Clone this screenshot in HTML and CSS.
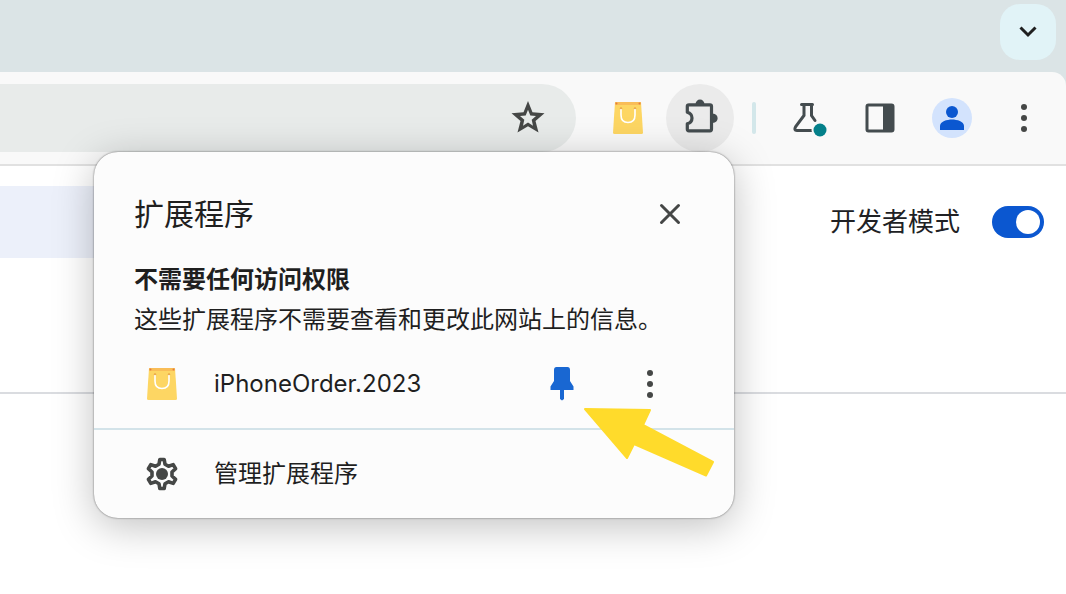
FILE: index.html
```html
<!DOCTYPE html>
<html lang="zh-CN">
<head>
<meta charset="utf-8">
<title>扩展程序</title>
<link rel="stylesheet" href="styles.css">
</head>
<body>
<svg class="defs" aria-hidden="true">
  <symbol id="bag" viewBox="0 0 32 34">
    <path d="M3 1H29L31 31.500Q31 33 29.500 33H2.500Q1 33 1 31.500Z" fill="#fdd663"/>
    <path d="M3 1H29V4H3Z" fill="#f9bd57"/>
    <circle cx="4.500" cy="2.500" r="1" fill="#e37b3d"/><circle cx="27.500" cy="2.500" r="1" fill="#e37b3d"/>
    <circle cx="9" cy="7.500" r="1.200" fill="#e9a345"/><circle cx="23" cy="7.500" r="1.200" fill="#e9a345"/>
    <path d="M9 8.500V14Q9 21.500 16 21.500Q23 21.500 23 14V8.500" fill="none" stroke="#fff" stroke-width="1.600" stroke-linecap="round"/>
  </symbol>
  <symbol id="dots" viewBox="0 0 32 32">
    <circle cx="16" cy="5" r="3"/><circle cx="16" cy="16" r="3"/><circle cx="16" cy="27" r="3"/>
  </symbol>
</svg>
<div class="browser">
  <div class="tabstrip">
    <button class="tab-search" aria-label="搜索标签页">
      <svg class="icon" viewBox="0 0 32 32"><path d="M8.500 11.500L16 19L23.500 11.500" fill="none" stroke="#1f1f1f" stroke-width="3"/></svg>
    </button>
  </div>
  <div class="toolbar">
    <div class="omnibox">
      <button class="star" aria-label="添加书签">
        <svg class="icon" viewBox="0 0 32 32"><path fill="#454746" fill-rule="evenodd" d="M16 -1L20.500 10.300L32.500 11.200L23.500 19L26.500 30.500L16 24.300L5.500 30.500L8.500 19L-.5 11.200L11.500 10.300ZM16 7.800L13.700 13.500L8 14L12.300 17.800L11 23.700L16 20.600L21 23.700L19.700 17.800L24 14L18.300 13.500Z"/></svg>
      </button>
    </div>
    <div class="tools">
      <button class="tool" aria-label="iPhoneOrder.2023"><svg class="bag"><use href="#bag"/></svg></button>
      <button class="tool active" aria-label="扩展程序">
        <svg class="puzzle" viewBox="0 0 36 36">
          <path d="M7 4.800H28Q29.500 4.800 29.500 6.300V29.300Q29.500 30.800 28 30.800H7Q5.300 30.800 5.300 29.300V23.800Q10 22.500 10 18Q10 13.500 5.300 12.200V6.300Q5.300 4.800 7 4.800Z" fill="none" stroke="#444c4f" stroke-width="3.200" stroke-linejoin="round"/>
          <path d="M13.500 4.500A4.500 5 0 0 1 22.500 4.500ZM30.500 13.500A6 4.800 0 0 1 30.500 23Z" fill="#444c4f"/>
        </svg>
      </button>
      <span class="divider"></span>
      <button class="tool" aria-label="实验">
        <svg class="flask" viewBox="0 0 36 36">
          <path d="M11.500 4.500H22.500M14 5V15.500L5.700 26.500Q3.500 30.500 7 30.500H22M21.500 5V15.500L25 20.500" fill="none" stroke="#444c4f" stroke-width="3" stroke-linecap="round"/>
          <circle cx="30" cy="30" r="8.500" fill="#f9f9f9"/><circle cx="30" cy="30" r="6.500" fill="#04808a"/>
        </svg>
      </button>
      <button class="tool" aria-label="侧边栏">
        <svg class="icon" viewBox="0 0 32 32"><rect x="3" y="3" width="26" height="26" rx="1.500" fill="none" stroke="#444c4f" stroke-width="3"/><path d="M19 3H29V29H19Z" fill="#444c4f"/></svg>
      </button>
      <button class="tool" aria-label="个人资料">
        <svg class="avatar" viewBox="0 0 40 40"><circle cx="20" cy="20" r="20" fill="#d3e3fd"/><circle cx="20" cy="14" r="6" fill="#0b57d0"/><path d="M8 32V28C8 23.500 15 21.500 20 21.500S32 23.500 32 28V32Z" fill="#0b57d0"/></svg>
      </button>
      <button class="tool" aria-label="更多"><svg class="icon dots"><use href="#dots"/></svg></button>
    </div>
  </div>
  <main class="page">
    <div class="page-top">
      <div class="nav-highlight"></div>
      <label class="dev-mode">开发者模式<input class="switch" type="checkbox" role="switch" checked></label>
    </div>
  </main>
  <section class="popup" aria-labelledby="popup-title">
    <div class="popup-main">
      <header class="popup-header">
        <h1 class="title" id="popup-title">扩展程序</h1>
        <button class="action" aria-label="关闭"><svg class="icon" viewBox="0 0 32 32"><path d="M7.500 7.500L24.500 24.500M24.500 7.500L7.500 24.500" stroke="#454746" stroke-width="3" stroke-linecap="round"/></svg></button>
      </header>
      <h2 class="subtitle">不需要任何访问权限</h2>
      <p class="description">这些扩展程序不需要查看和更改此网站上的信息。</p>
      <div class="extension">
        <button class="row"><svg class="bag"><use href="#bag"/></svg><span>iPhoneOrder.2023</span></button>
        <button class="action" aria-label="取消固定">
          <svg class="pin" viewBox="0 0 36 36"><path d="M12.500 1H23.500Q26 1 26 4V15L29.500 20.500V24H20V33L18 34.500L16 33V24H6.500V20.500L10 15V4Q10 1 12.500 1Z" fill="#1967d2"/></svg>
        </button>
        <button class="action last" aria-label="更多选项"><svg class="icon dots"><use href="#dots"/></svg></button>
      </div>
    </div>
    <button class="row manage">
      <svg class="icon" viewBox="0 0 32 32">
        <path d="M13.800 1.500H18.200L19 6.300L22.500 8.300L27.200 6.600L29.600 10.700L26 14V18L29.600 21.300L27.200 25.400L22.500 23.700L19 25.700L18.200 30.500H13.800L13 25.700L9.500 23.700L4.800 25.400L2.400 21.300L6 18V14L2.400 10.700L4.800 6.600L9.500 8.300L13 6.300Z" fill="none" stroke="#454746" stroke-width="3.600" stroke-linejoin="round"/>
        <circle cx="16" cy="16" r="6" fill="#454746"/>
      </svg>
      <span>管理扩展程序</span>
    </button>
    <svg class="arrow" viewBox="0 0 134 72" aria-hidden="true"><path d="M3 3L68 4L61 19L131 56L124 69.500L52 38L45 52Z" fill="#ffdb2b" stroke="#ffdb2b" stroke-width="2" stroke-linejoin="round"/></svg>
  </section>
</div>
</body>
</html>
```
FILE: styles.css
```css
* { box-sizing: border-box; }
body {
  margin: 0;
  background: #fff;
  color: #1f1f1f;
  font-family: Inter, "Noto Sans CJK SC", sans-serif;
  font-size: 24px;
  line-height: 40px;
}
button {
  display: flex;
  align-items: center;
  justify-content: center;
  padding: 0;
  border: 0;
  background: none;
  color: inherit;
  font: inherit;
}
svg { display: block; flex: none; overflow: visible; }
.defs { position: absolute; width: 0; height: 0; }
.browser { position: relative; min-height: 100vh; overflow: hidden; background: #fff; }
.icon { width: 32px; height: 32px; }
.bag { width: 32px; height: 34px; }
.puzzle, .flask, .pin { width: 36px; height: 36px; }
.avatar { width: 40px; height: 40px; }
.dots { fill: #454746; }

.tabstrip { display: flex; justify-content: flex-end; height: 92px; padding: 4px 10px; background: #dbe4e6; }
.tab-search { width: 56px; height: 56px; border-radius: 20px; background: #e1f3f7; }

.toolbar {
  display: flex;
  gap: 18px;
  height: 94px;
  margin-top: -20px;
  padding: 12px 8px 12px 0;
  border-bottom: 2px solid #e1e1e1;
  border-radius: 0 14px 0 0;
  background: #f9f9f9;
}
.omnibox { display: flex; flex: 1; justify-content: flex-end; height: 68px; padding-right: 14px; border-radius: 0 34px 34px 0; background: #e8ebea; }
.star { width: 68px; }
.tools { display: flex; align-items: center; gap: 4px; }
.tool { width: 68px; height: 68px; border-radius: 50%; }
.active { background: #ebebeb; }
.divider { width: 4px; height: 32px; margin: 0 14px; border-radius: 2px; background: #d3e7ea; }

.page-top { display: flex; align-items: flex-start; justify-content: space-between; height: 228px; padding: 20px 22px 0 0; border-bottom: 2px solid #dadce0; }
.nav-highlight { width: 25%; height: 72px; background: #ecf0fa; }
.dev-mode { display: flex; align-items: center; gap: 32px; height: 72px; color: #202124; font-size: 26px; }
.switch { width: 52px; height: 32px; margin: 0; padding: 4px; border-radius: 16px; background: #0b57d0; appearance: none; }
.switch::before { content: ""; display: block; width: 24px; height: 24px; border-radius: 50%; background: #fff; }
.switch:checked::before { margin-left: auto; }

.popup {
  position: absolute;
  top: 152px;
  right: 332px;
  width: 640px;
  border-radius: 24px;
  background: #fcfcfc;
  box-shadow: 0 0 2px rgba(0, 0, 0, .6), 0 8px 40px rgba(0, 0, 0, .25);
}
.popup-main { padding: 30px 40px 12px; border-bottom: 2px solid #d3e3e9; }
.popup-header { display: flex; align-items: center; justify-content: space-between; margin-bottom: 14px; }
.title { margin: 0; font-size: 30px; font-weight: 400; line-height: 56px; }
.subtitle { margin: 0; font-size: 24px; font-weight: 700; }
.description { margin: 0; white-space: nowrap; }
.action { width: 48px; height: 64px; }
.extension { display: flex; align-items: center; gap: 40px; padding-right: 20px; margin-top: 12px; }
.row { display: flex; flex: 1; justify-content: flex-start; gap: 36px; height: 64px; padding-left: 12px; text-align: left; }
.manage { width: 100%; height: 88px; padding-left: 52px; }
.arrow { position: absolute; top: 254px; left: 488px; width: 134px; height: 72px; }
```
